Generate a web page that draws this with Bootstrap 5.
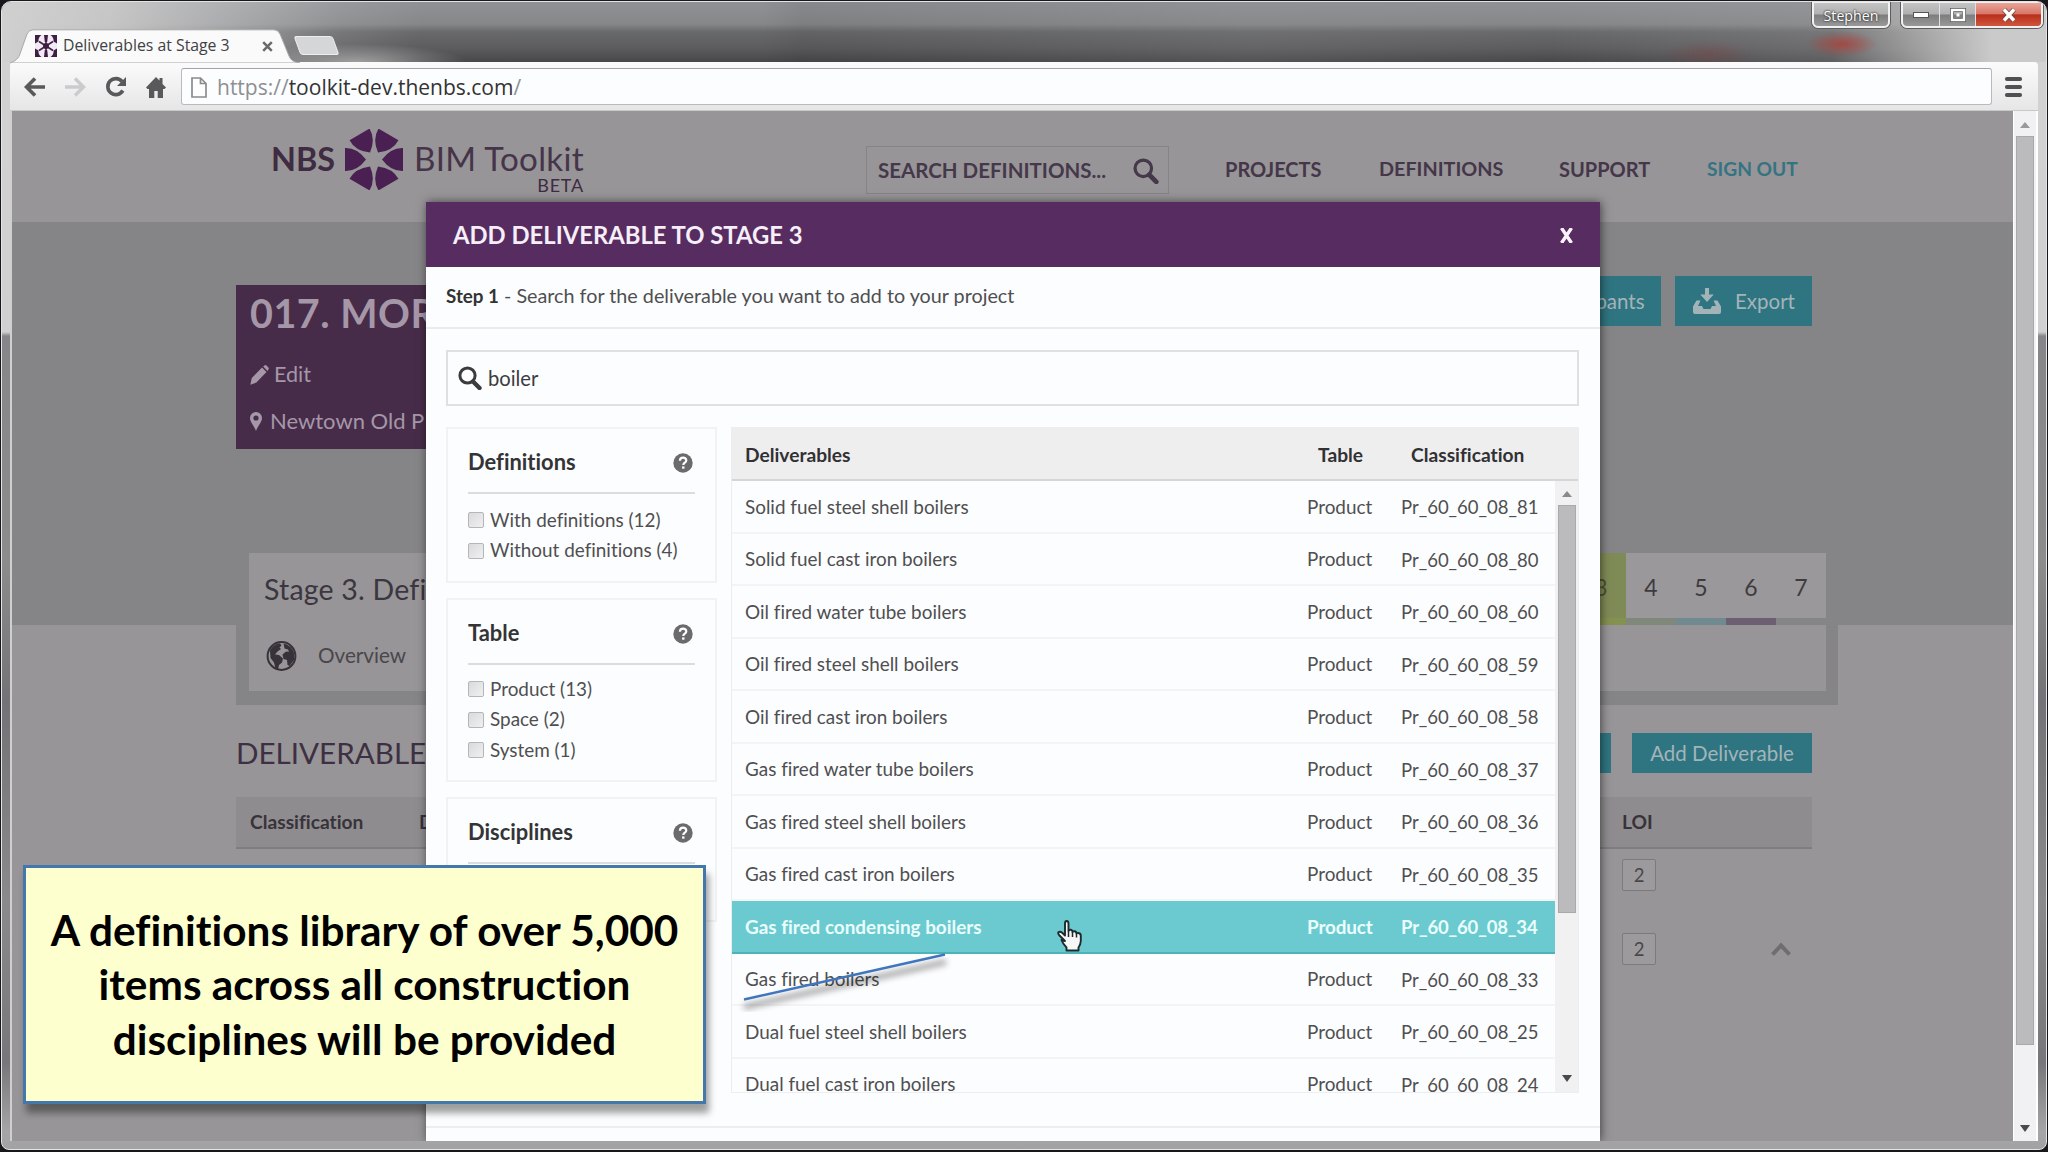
<!DOCTYPE html>
<html lang="en">
<head>
<meta charset="utf-8">
<title>Deliverables at Stage 3</title>
<link href="https://cdn.jsdelivr.net/npm/bootstrap@5.3.0/dist/css/bootstrap.min.css" rel="stylesheet">
<style>
  body { width: 2048px; height: 1152px; overflow: hidden; background: #17171c; font-family: Lato, "Liberation Sans", sans-serif; font-variant-ligatures: none; font-size: 18.9px; line-height: 1; color: #4f4f51; }
  svg { display: block; flex: none; }
  .nowr, .site-nav, .rowline { white-space: nowrap; }
  .chrome-ui { font-family: "Open Sans", "Noto Sans", sans-serif; }

  /* window frame */
  .win { position: relative; width: 2046px; height: 1149px; margin: 1px 1px 0; border: 1px solid #e4e4e4; border-radius: 10px 10px 8px 8px; overflow: hidden;
    background: linear-gradient(#d2d2d2 0, #d0d0d0 330px, #86868a 334px, #8c8c8c 560px, #737377 700px, #8a8a8c 900px, #77777b 1060px, #a5a4a6 1130px, #a2a1a3 100%); }
  .title-strip { height: 60px; padding-left: 8px;
    background:
      radial-gradient(ellipse 36px 13px at 1840px 42px, rgba(176,60,52,.75), rgba(176,60,52,0)),
      radial-gradient(ellipse 45px 14px at 1706px 52px, rgba(130,60,60,.35), rgba(130,60,60,0)),
      radial-gradient(ellipse 110px 18px at 355px 60px, rgba(190,190,190,.7), rgba(190,190,190,0)),
      linear-gradient(90deg, #d0d0d0 0, rgba(208,208,208,.85) 110px, rgba(200,200,200,.15) 340px, rgba(200,200,200,0) 420px, rgba(0,0,0,0) 760px, rgba(0,0,0,.06) 800px, rgba(150,150,150,.14) 1250px, rgba(160,160,160,.0) 1550px, rgba(160,160,160,.25) 1830px, #cbcaca 1990px),
      linear-gradient(#8f9295 0, #858789 22px, #68696b 30px, #5c5c5f 46px, #474649 100%); }
  .tab-shape { width: 290px; height: 33px; margin-top: 27px; position: relative; }
  .tab-shape > svg.tab-bg { position: absolute; left: 0; top: 0; }
  .tab-row { position: relative; height: 34px; padding-left: 25px; font-size: 15.8px; color: #3f4144; }
  .newtab { width: 39px; height: 19px; margin: 34px 0 0 -3px; background: #d5d6d8; border: 1px solid #eee; transform: skewX(20deg); border-radius: 3px; }
  .win-btns { margin-right: 3px; }
  .wbtn { height: 26px; border: 2px solid #f1f1f1; border-top-width: 1px; background: linear-gradient(#c3c3c3 0, #b0b0b0 48%, #7d7d7d 52%, #989898); box-shadow: 0 0 0 1px #5d5d5d; }
  .user-btn { width: 78px; border-radius: 0 0 6px 6px; color: #fff; font-size: 14.2px; text-shadow: 0 0 2px #333, 0 0 2px #333; margin-right: 11px; padding-top: 3px; }
  .ctl-group { border-radius: 0 0 6px 6px; width: 142px; overflow: hidden; }
  .ctl-close { width: 66px; background: linear-gradient(#e9a598 0, #d9776a 46%, #b92e1c 52%, #d0563c); }
  .toolbar-strip { height: 49px; width: 2028px; margin-left: 8px; background: linear-gradient(#fbfbfb, #e6e6e7); border-bottom: 1px solid #c9c9c9; border-radius: 4px 4px 0 0; padding: 6px 0 0 14px; }
  .addr { width: 1811px; height: 37px; margin-left: 15px; border: 1px solid #b9babd; border-top-color: #a3a4a7; border-radius: 3px; background: #fcfdff; padding: 2px 0 0 9px; font-size: 21px; color: #333; }
  .addr .faint { color: #8e8f92; }
  .main-area { width: 2028px; height: 1030px; margin-left: 8px; background: #fff; }

  /* scrollbars */
  .vbar { width: 23px; height: 1030px; background: #f1f0f2; border-left: 1px solid #fff; }
  .vthumb { width: 18px; background: #bbbabd; border: 1px solid #a9a8ab; }

  /* dimmed site */
  .site { position: relative; width: 2003px; height: 1030px; overflow: hidden; background: #979597; border-left: 2px solid #d0cfd0; }
  .site-head { height: 111px; padding-left: 259px; }
  .ink { color: #3f2b42; }
  .brand-nbs { font-weight: 700; font-size: 32.4px; width: 64px; }
  .brand-name { font-size: 33.2px; line-height: 40px; color: #45344a; letter-spacing: .3px; }
  .brand-beta { font-size: 18px; line-height: 20px; letter-spacing: .8px; margin-top: -3px; }
  .site-search { width: 303px; height: 48px; margin: 35px 0 0 282px; border: 1px solid #858385; padding: 1px 9px 0 11px; font-weight: 700; font-size: 20.5px; color: #45384a; }
  .site-nav { font-weight: 700; font-size: 20px; color: #45364a; margin-left: 56px; height: 115px; }
  .site-nav span { display: block; }
  .hero { height: 403px; background: #858486; padding: 54px 0 0 224px; }
  .topline { width: 1576px; height: 173px; }
  .project { width: 500px; height: 164px; margin-top: 9px; padding-left: 14px; background: #462c49; color: #a597a8; }
  .project h1 { font-size: 39.5px; font-weight: 700; margin: 0; line-height: 55px; height: 56px; letter-spacing: .5px; }
  .teal-btn { background: #2f7581; color: #a3b4b9; border: 0; border-radius: 0; padding: 0; font-size: 20.5px; height: 50px; }
  .stage-wrap { position: relative; width: 1602px; height: 165px; margin-top: 91px; padding: 13px 12px 14px 13px; background: #858486; }
  .stage-box { height: 138px; background: #979597; }
  .stage-num { width: 50px; height: 72px; padding-top: 3px; font-size: 23px; color: #3e3b40; border-bottom: 7px solid #858486; background: #9a989a; }
  .n3 { background: #7f8b56; border-color: #84914f; color: #4c5336; } .n4 { border-color: #7f887a; } .n5 { border-color: #708a8f; } .n6 { border-color: #6c5f72; }
  .deliv { padding: 108px 0 0 224px; width: 1800px; }
  .deliv h2 { font-size: 29.6px; font-weight: 400; margin: 0; color: #3d3042; }
  .deliv-head { height: 52px; margin-top: 24px; background: #8e8c8e; border-bottom: 2px solid #7f7d7f; font-weight: 700; color: #38333a; font-size: 19.2px; padding-left: 14px; }
  .loi { width: 34px; height: 32px; border: 1.5px solid #7c7a7c; border-radius: 2px; background: #9c9a9c; font-size: 18.5px; color: #4a474b; }

  /* dialog */
  .dlg { position: absolute; left: 414px; top: 91px; width: 1174px; height: 939px; background: #fcfdfe; box-shadow: 1px 0 9px rgba(0,0,0,.55); }
  .dlg-head { height: 65px; background: #572c60; color: #f6eef8; font-weight: 700; font-size: 23.8px; padding: 2px 27px 0 27px; }
  .dlg-step { height: 62px; padding: 0 20px 2px; font-size: 19.75px; border-bottom: 2px solid #e9ebed; }
  .dlg-step b { font-size: 18.8px; color: #333; }
  .dlg-body { padding: 21px 21px 0 20px; }
  .qbox { height: 56px; border: 2px solid #dfe0e2; padding-left: 10px; font-size: 20.2px; color: #3d3d3f; margin-bottom: 21px; }
  .facets { width: 271px; margin-right: 14px; }
  .facet { border: 2px solid #f0f2f3; background: #fcfdfe; padding: 0 20px; margin-bottom: 15px; }
  .facet-title { height: 65px; padding: 4px 2px 0 0; font-weight: 700; font-size: 21.900px; color: #343436; border-bottom: 2px solid #dbdcde; }
  .facet-title span { margin-top: -2px; }
  .facet-list { padding-top: 11px; }
  .tight { padding-top: 9px; }
  .facet-item { height: 30.5px; font-size: 18.9px; }
  .ckb { width: 16px; height: 16px; border: 1.5px solid #b5b6b8; border-radius: 2px; background: linear-gradient(135deg, #d9dadb, #f0f0f1); margin-right: 6px; }
  .grid-panel { width: 848px; height: 666px; border: 1px solid #eceef0; overflow: hidden; }
  .grid-head { height: 53px; padding-top: 2px; background: #eeeeef; border-bottom: 2px solid #d5d6d8; font-weight: 700; font-size: 19.2px; color: #313133; }
  .c-name { width: 586px; padding-left: 13px; } .c-kind { width: 84px; }
  .rowline { height: 52.5px; width: 824px; padding: 2px 0 0; border-bottom: 2px solid #f2f4f5; font-size: 18.9px; }
  .rowline .c-kind { width: 94px; margin-left: -11px; }
  .rowline .c-code { font-size: 18.5px; }
  .rowline.hot { background: #6bcacf; border-bottom-color: #4eb3b8; color: #eafdfd; font-weight: 700; }
  .rowline.hot .c-kind, .rowline.hot .c-code { letter-spacing: -.15px; }
  .gridbar { width: 23px; height: 611px; background: #f1f1f2; padding-left: 1px; }
  .dlg-foot { border-top: 2px solid #eceef0; margin-top: 33px; }

  /* slide annotations */
  .callout-box { position: absolute; left: 23px; top: 865px; width: 683px; height: 239px; background: #feffcf; border: 3px solid #4478ad; box-shadow: 3px 9px 7px rgba(0,0,0,.38); color: #000; font-weight: 700; font-size: 42.3px; line-height: 54.5px; }
  .strike-line { position: absolute; left: 735px; top: 945px; }
  .hand { position: absolute; left: 1056px; top: 919px; }
</style>
</head>
<body>
<svg width="0" height="0" class="position-absolute">
  <symbol id="petals" viewBox="-30 -30.5 60 61">
    <g id="pset"><path id="pt" d="M-29-11.500Q-17-12-8 0Q-17 12-29 11.500Z"/><use href="#pt" transform="rotate(60)"/><use href="#pt" transform="rotate(120)"/><use href="#pt" transform="rotate(180)"/><use href="#pt" transform="rotate(240)"/><use href="#pt" transform="rotate(300)"/></g>
  </symbol>
  <symbol id="mag" viewBox="0 0 24 24"><circle cx="9.5" cy="9.5" r="7.6" fill="none" stroke="currentColor" stroke-width="3"/><path d="M15 15.5 21.5 22" stroke="currentColor" stroke-width="4.4" stroke-linecap="round"/></symbol>
  <symbol id="help" viewBox="0 0 20 20"><circle cx="10" cy="10" r="9.7" fill="#6b6b6d"/><path d="M6.9 7.8C7 5.6 8.300 4.700 10.100 4.700c1.900 0 3.200 1 3.200 2.700 0 2.300-3 2.200-3 4.700" fill="none" stroke="#fff" stroke-width="2.200"/><rect x="9.100" y="13.400" width="2.400" height="2.300" fill="#fff"/></symbol>
</svg>

<div class="win">
  <div class="title-strip d-flex align-items-start">
    <div class="tab-shape chrome-ui">
      <svg class="tab-bg" width="290" height="34" viewBox="0 0 290 34"><path d="M0 34C8 31 9 28 11 22L17 5Q19 .8 23 .8H264Q268 .8 270 5L279 27Q281 33 290 34Z" fill="#fafafa" stroke="#a8a8a8"/></svg>
      <div class="tab-row d-flex align-items-center nowr">
        <svg width="22" height="22" viewBox="0 0 22 22" class="me-2"><rect width="22" height="22" fill="#f3e9f5"/><g fill="#3c1f42"><path d="M0 0H6.500Q3 2.500 3.500 6.500L0 8.500zM22 0H15.500Q19 2.500 18.500 6.500L22 8.500zM0 22H6.500Q3 19.500 3.500 15.500L0 13.500zM22 22H15.500Q19 19.500 18.500 15.500L22 13.500z"/><path d="M9 0h4l-.8 7h-2.400zM9 22h4l-.8-7h-2.400z"/><circle cx="11" cy="11" r="3"/><path d="M4 6.500 11 11 18 6.500M4 15.500 11 11 18 15.500M11 4V18" stroke="#3c1f42" stroke-width="1.500" fill="none"/></g></svg>
        <span style="margin-left:-2px">Deliverables at Stage 3</span>
        <svg class="ms-auto" width="11" height="11" viewBox="0 0 11 11" style="margin-right:27px"><path d="M1.200 1.200 9.800 9.800M9.800 1.200 1.200 9.800" stroke="#6a6a6c" stroke-width="2.500"/></svg>
      </div>
    </div>
    <div class="newtab"></div>
    <div class="win-btns ms-auto d-flex chrome-ui">
      <div class="wbtn user-btn d-flex align-items-center justify-content-center">Stephen</div>
      <div class="wbtn ctl-group d-flex">
        <div class="d-flex align-items-center justify-content-center border-end" style="width:38px"><svg width="16" height="6"><rect x=".5" y=".5" width="15" height="5" fill="#fff" stroke="#555"/></svg></div>
        <div class="d-flex align-items-center justify-content-center border-end" style="width:37px"><svg width="16" height="14"><rect x="2" y="2" width="12" height="10" fill="none" stroke="#555" stroke-width="4"/><rect x="2" y="2" width="12" height="10" fill="none" stroke="#fff" stroke-width="2.500"/><rect x="6.500" y="5.500" width="3" height="3" fill="#fff"/></svg></div>
        <div class="ctl-close d-flex align-items-center justify-content-center"><svg width="16" height="14" viewBox="0 0 16 14"><path d="M3 1.500 13 12.500M13 1.500 3 12.500" stroke="#6a4540" stroke-width="5"/><path d="M3 1.500 13 12.500M13 1.500 3 12.500" stroke="#fff" stroke-width="3.400"/></svg></div>
      </div>
    </div>
  </div>

  <div class="toolbar-strip d-flex chrome-ui">
    <div class="d-flex align-items-center" style="height:37px">
      <svg width="21" height="20" viewBox="0 0 21 20"><path d="M11 1.500 2.500 10l8.500 8.500M3 10h18" fill="none" stroke="#59595b" stroke-width="3.600"/></svg>
      <svg width="21" height="20" viewBox="0 0 21 20" style="margin-left:20px"><path d="M10 1.500 18.500 10 10 18.500M18 10H0" fill="none" stroke="#cacbcd" stroke-width="3.400"/></svg>
      <svg width="22" height="22" viewBox="0 0 22 22" style="margin-left:19px"><path d="M17.800 14.500A8 8 0 1 1 17 5.500" fill="none" stroke="#59595b" stroke-width="3.600"/><path d="M21 1v9h-9z" fill="#59595b"/></svg>
      <svg width="20" height="22" viewBox="0 0 20 22" style="margin-left:19px"><path d="M10 1 0 11.500l1.500 1.500H3v9h5.300v-7h3.400v7H17v-9h1.500l1.500-1.500-3.500-3.600V2h-3v2.600z" fill="#59595b"/></svg>
    </div>
    <div class="addr d-flex align-items-center nowr">
      <svg width="16" height="21" viewBox="0 0 16 21" style="margin-right:10px"><path d="M1 1h8.500L15 6.500V20H1zM9.500 1v5.500H15" fill="#fdfdfd" stroke="#8a8b8e" stroke-width="1.700"/></svg>
      <span><span class="faint">https://</span>toolkit-dev.thenbs.com<span class="faint">/</span></span>
    </div>
    <svg width="20" height="24" viewBox="0 0 20 24" style="margin:7px 0 0 12px"><path d="M3 4h13M3 12h13M3 20h13" stroke="#505053" stroke-width="4.200" stroke-linecap="round"/></svg>
  </div>

  <div class="main-area d-flex">
    <div class="site">
      <header class="site-head d-flex nowr">
        <div class="d-flex ink" style="width:313px">
          <div class="brand-nbs" style="padding-top:32px">NBS</div>
          <svg width="60" height="61" fill="#4a1f52" style="margin:18px 9px 0"><use href="#petals"/></svg>
          <div class="text-end" style="width:173px;padding-top:27px"><div class="brand-name">BIM Toolkit</div><div class="brand-beta">BETA</div></div>
        </div>
        <div class="site-search d-flex align-items-center justify-content-between"><span>SEARCH DEFINITIONS...</span><svg width="26" height="26"><use href="#mag"/></svg></div>
        <nav class="site-nav d-flex align-items-center">
          <span style="width:154px">PROJECTS</span><span style="width:180px;font-size:19.800px">DEFINITIONS</span><span style="width:148px">SUPPORT</span><span style="color:#347482;font-size:19.200px">SIGN OUT</span>
        </nav>
      </header>

      <section class="hero">
        <div class="topline d-flex align-items-start">
          <div class="project nowr">
            <h1>017. MOR</h1>
            <div class="d-flex align-items-center" style="height:67px;font-size:21.600px"><svg width="19" height="20" viewBox="0 0 19 20" style="margin-right:5px"><path d="M.3 19.700 1.800 13 12 2.600l4.500 4.500L6.400 17.600zM13.200 1.500 14.500.4q1-.7 2 .2l1.900 1.900q.8.900 0 1.900L17.500 5.900z" fill="#a597a8"/></svg>Edit</div>
            <div class="d-flex align-items-center" style="height:26px;font-size:22px"><svg width="12" height="19" viewBox="0 0 12 19" style="margin-right:8px"><path fill-rule="evenodd" d="M6 0a6 6 0 0 1 6 6c0 4-4 7.500-6 13C4 13.500 0 10 0 6a6 6 0 0 1 6-6zM6 3.400a2.600 2.600 0 1 0 0 5.200 2.600 2.600 0 0 0 0-5.200z" fill="#a597a8"/></svg>Newtown Old P</div>
          </div>
          <button class="btn teal-btn ms-auto" style="width:170px;padding-left:31px">Participants</button>
          <button class="btn teal-btn d-flex align-items-center" style="width:137px;margin-left:14px;padding-left:18px"><svg width="28" height="26" viewBox="0 0 28 26" style="margin-right:14px" fill="#a3b4b9"><path d="M12 0h4v6.500h4.700L14 14 7.300 6.500H12z"/><path d="M3.500 12.500 0 18.500V24q0 2 2 2h24q2 0 2-2v-5.500l-3.500-6h-4l2.500 5.500h-4l-1.500 3h-7L9 18H5l2.500-5.500z"/></svg>Export</button>
        </div>
        <div class="stage-wrap">
          <div class="stage-box">
            <div class="d-flex justify-content-between" style="height:72px">
              <div style="font-size:28.500px;padding:22px 0 0 15px;color:#3b3640;letter-spacing:.2px">Stage 3. Defi</div>
              <div class="d-flex">
                <div class="stage-num n3 d-flex align-items-center justify-content-center">3</div>
                <div class="stage-num n4 d-flex align-items-center justify-content-center">4</div>
                <div class="stage-num n5 d-flex align-items-center justify-content-center">5</div>
                <div class="stage-num n6 d-flex align-items-center justify-content-center">6</div>
                <div class="stage-num d-flex align-items-center justify-content-center">7</div>
              </div>
            </div>
            <div class="d-flex align-items-center" style="height:61px;padding-left:17px;font-size:20.700px;color:#4a464c">
              <svg width="31" height="30" viewBox="0 0 31 30" style="margin-right:21px"><circle cx="15.500" cy="15" r="13.900" fill="#979597" stroke="#37323a" stroke-width="2"/><path d="M4 9.500C6 5.500 10 2.500 14 2.300l1.500 2.200-2 2 1.500 1.500-3.500 2.500-2.500 3 4 .5 4 3.500-1 4-3 2.500-1 4.500-2.500-1-1.500-6-3.500-4.500z" fill="#37323a"/><path d="M17.500 2.500q8 1.500 10.800 10l-.3 6.500-4.500 6-2-1-.5-5-3.500-1-1-4.500 3.500-3 3 .3-1-2.300-3.500-1z" fill="#37323a"/></svg>
              Overview
            </div>
          </div>
        </div>
      </section>

      <section class="deliv">
        <div class="d-flex align-items-center" style="height:40px">
          <h2>DELIVERABLE</h2>
          <button class="btn teal-btn ms-auto" style="width:60px;height:40px"></button>
          <button class="btn teal-btn" style="width:180px;height:40px;margin-left:21px">Add Deliverable</button>
        </div>
        <div class="deliv-head d-flex align-items-center"><span style="width:169px">Classification</span><span style="width:1203px">D</span><span>LOI</span></div>
        <div style="padding:10px 0 0 1386px"><div class="loi d-flex align-items-center justify-content-center">2</div></div>
        <div class="d-flex align-items-center" style="padding:42px 0 0 1386px"><div class="loi d-flex align-items-center justify-content-center">2</div><svg width="22" height="14" viewBox="0 0 22 14" style="margin-left:114px"><path d="M2.500 12.500 11 3.500l8.500 9" fill="none" stroke="#6f6d70" stroke-width="4"/></svg></div>
      </section>

      <div class="dlg" role="dialog">
        <div class="dlg-head d-flex align-items-center justify-content-between"><span>ADD DELIVERABLE TO STAGE 3</span><svg width="13" height="15" viewBox="0 0 13 15"><path d="M1.500 0 11.500 15M11.500 0 1.500 15" stroke="#fbf3fc" stroke-width="3.400"/></svg></div>
        <div class="dlg-step d-flex align-items-center nowr"><span><b>Step 1</b> - Search for the deliverable you want to add to your project</span></div>
        <div class="dlg-body">
          <div class="qbox d-flex align-items-center"><svg width="24" height="24" style="margin-right:6px;color:#3c3c3e"><use href="#mag"/></svg>boiler</div>
          <div class="d-flex">
            <aside class="facets">
              <div class="facet" style="height:156px"><div class="facet-title d-flex align-items-center justify-content-between"><span>Definitions</span><svg width="20" height="20"><use href="#help"/></svg></div>
                <div class="facet-list"><div class="facet-item d-flex align-items-center"><i class="ckb"></i>With definitions (12)</div><div class="facet-item d-flex align-items-center"><i class="ckb"></i>Without definitions (4)</div></div></div>
              <div class="facet" style="height:184px"><div class="facet-title d-flex align-items-center justify-content-between"><span>Table</span><svg width="20" height="20"><use href="#help"/></svg></div>
                <div class="facet-list tight"><div class="facet-item d-flex align-items-center"><i class="ckb"></i>Product (13)</div><div class="facet-item d-flex align-items-center"><i class="ckb"></i>Space (2)</div><div class="facet-item d-flex align-items-center"><i class="ckb"></i>System (1)</div></div></div>
              <div class="facet" style="height:125px"><div class="facet-title d-flex align-items-center justify-content-between"><span>Disciplines</span><svg width="20" height="20"><use href="#help"/></svg></div></div>
            </aside>
            <div class="grid-panel">
              <div class="grid-head d-flex align-items-center"><span class="c-name">Deliverables</span><span class="c-kind">Table</span><span style="margin-left:9px">Classification</span></div>
              <div class="d-flex">
                <div class="overflow-hidden" id="rows" style="height:612px"></div>
                <div class="gridbar d-flex flex-column align-items-center">
                  <svg width="12" height="24" viewBox="0 0 12 24"><path d="M1 16 6 10l5 6z" fill="#8a8a8c"/></svg>
                  <div class="vthumb" style="height:408px"></div>
                  <svg class="mt-auto" width="12" height="24" viewBox="0 0 12 24"><path d="M1 7 6 14l5-7z" fill="#4a4a4c"/></svg>
                </div>
              </div>
            </div>
          </div>
        </div>
        <div class="dlg-foot"></div>
      </div>
    </div>
    <div class="vbar d-flex flex-column align-items-center">
      <svg width="12" height="25" viewBox="0 0 12 25"><path d="M1 17 6 11l5 6z" fill="#9a9a9c"/></svg>
      <div class="vthumb" style="height:909px"></div>
      <svg class="mt-auto" width="12" height="24" viewBox="0 0 12 24"><path d="M1 8 6 15l5-7z" fill="#4a4a4c"/></svg>
    </div>
  </div>
</div>

<svg class="strike-line" width="230" height="75" viewBox="0 0 230 75"><defs><filter id="soft"><feGaussianBlur stdDeviation="3"/></filter></defs><path d="M9 62 211 17" stroke="#000" stroke-opacity=".38" stroke-width="5" filter="url(#soft)"/><path d="M9 54.500 210 9.500" stroke="#3f76bd" stroke-width="2.400"/></svg>
<svg class="hand" width="28" height="34" viewBox="0 0 28 34"><path d="M9 22 3.500 16.500Q1.500 14.500 2.500 13.200 4 12 6.500 14L9 16.500V4.500Q9 2 10.700 2T12.500 4.500V12Q13 10.700 14.500 10.800 16.500 11 16.500 13 17 12 18.500 12.200 20.500 12.500 20.500 14.500 21 13.600 22.500 14 25 14.500 24.800 17V22Q24.500 26 22.500 28.500V31.500H10.500V28.500Q7 25 5.500 21z" fill="#f7f7f7" stroke="#1d2a2e" stroke-width="1.900" stroke-linejoin="round"/><path d="M12.500 12v6M16.500 13v5M20.500 14.500v4" stroke="#1d2a2e" stroke-width="1.500"/></svg>
<div class="callout-box d-flex align-items-center justify-content-center text-center nowr"><div>A definitions library of over 5,000<br>items across all construction<br>disciplines will be provided</div></div>

<script>
  const rows = [["Solid fuel steel shell boilers", 81], ["Solid fuel cast iron boilers", 80], ["Oil fired water tube boilers", 60], ["Oil fired steel shell boilers", 59], ["Oil fired cast iron boilers", 58], ["Gas fired water tube boilers", 37], ["Gas fired steel shell boilers", 36], ["Gas fired cast iron boilers", 35], ["Gas fired condensing boilers", 34], ["Gas fired boilers", 33], ["Dual fuel steel shell boilers", 25], ["Dual fuel cast iron boilers", 24]];
  document.getElementById("rows").innerHTML = rows.map(([n, c]) =>
    `<div class="rowline d-flex align-items-center${c === 34 ? " hot" : ""}"><span class="c-name">${n}</span><span class="c-kind">Product</span><span class="c-code">Pr_60_60_08_${c}</span></div>`).join("");
</script>
<script src="https://cdn.jsdelivr.net/npm/bootstrap@5.3.0/dist/js/bootstrap.bundle.min.js"></script>
</body>
</html>
